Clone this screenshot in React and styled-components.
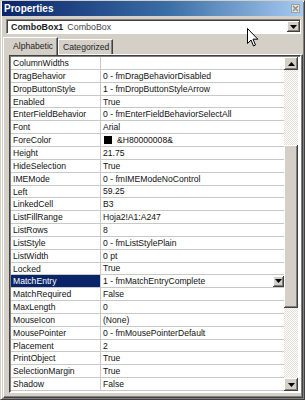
import React from 'react'
import styled, { createGlobalStyle } from 'styled-components'

const Global = createGlobalStyle`
  html, body { margin: 0; padding: 0; background: #d4d0c8; }
  * { box-sizing: border-box; }
`

const raised = `
  background: #d4d0c8;
  box-shadow: inset -1px -1px #404040, inset 1px 1px #ffffff, inset -2px -2px #808080, inset 2px 2px #d4d0c8;
`

const Window = styled.div`
  position: relative;
  width: 305px;
  height: 400px;
  display: flex;
  flex-direction: column;
  background: #d4d0c8;
  border: 1px solid;
  border-color: #d4d0c8 #404040 #404040 #d4d0c8;
  box-shadow: inset 1px 1px #ffffff, inset -1px -1px #808080;
  font-family: "Liberation Sans", Arial, sans-serif;
  overflow: hidden;
`

const TitleBar = styled.div`
  height: 16px;
  margin: 0 1px;
  display: flex;
  align-items: center;
  justify-content: space-between;
  padding: 0 3px 0 2px;
  background: linear-gradient(to right, #0a246a 0%, #3a6ea5 55%, #a6caf0 100%);
  color: #fff;
  font-weight: bold;
  font-size: 10px;
`

const CloseButton = styled.div`
  width: 9px;
  height: 9px;
  display: flex;
  align-items: center;
  justify-content: center;
  background: #e4e2dc;
  border: 1px solid #a0a0a0;
`

const Body = styled.div`
  flex: 1;
  display: flex;
  flex-direction: column;
  padding: 0 1px;
`

const Combo = styled.div`
  height: 15px;
  margin: 3px 2px 0 4px;
  display: flex;
  align-items: center;
  background: #fff;
  border: 1px solid;
  border-color: #808080 #ffffff #ffffff #808080;
  box-shadow: inset 1px 1px #404040;
  font-size: 8.9px;
  padding-left: 4px;
  color: #222;
`

const ComboName = styled.span`
  font-weight: bold;
  margin-right: 4px;
`

const ComboText = styled.span`
  flex: 1;
  color: #444;
`

const SmallButton = styled.div`
  ${raised}
  width: ${p => p.$w || 13}px;
  height: ${p => p.$h || 12}px;
  display: flex;
  align-items: center;
  justify-content: center;
  flex-shrink: 0;
`

const Tabs = styled.div`
  display: flex;
  align-items: flex-end;
  margin-top: 2px;
  height: 18px;
  padding-left: 1px;
`

const Tab = styled.div`
  height: ${p => (p.$active ? 18 : 15)}px;
  width: ${p => p.$w}px;
  padding: ${p => (p.$active ? '3px 0 0 9px' : '2px 0 0 4px')};
  font-size: 8.6px;
  color: #222;
  background: #d4d0c8;
  border-top: 1px solid #ffffff;
  border-left: 1px solid #ffffff;
  border-right: 1px solid #404040;
  box-shadow: inset -1px 0 #808080;
  position: relative;
  z-index: ${p => (p.$active ? 2 : 1)};
  margin-bottom: ${p => (p.$active ? -1 : 0)}px;
`

const Panel = styled.div`
  flex: 1;
  display: flex;
  margin: 0 0 1px 1px;
  padding: 0 1px 4px 5px;
  border-top: 1px solid #ffffff;
  border-left: 1px solid #ffffff;
  border-right: 1px solid #404040;
  border-bottom: 1px solid #404040;
  box-shadow: inset -1px -1px #808080;
`

const Grid = styled.div`
  flex: 1;
  display: flex;
  background: #fff;
  border: 1px solid;
  border-color: #404040 #ffffff #ffffff #404040;
  box-shadow: inset 1px 1px #808080;
  padding: 1px 2px 1px 1px;
`

const Rows = styled.div`
  flex: 1;
  display: flex;
  flex-direction: column;
  overflow: hidden;
`

const Row = styled.div`
  height: 12.85px;
  flex-shrink: 0;
  display: flex;
  font-size: 8.6px;
  line-height: 12px;
  color: #111;
`

const NameCell = styled.div`
  width: 90px;
  padding-left: 2px;
  white-space: nowrap;
  overflow: hidden;
  border-bottom: 1px solid #c8c8c8;
  border-right: 1px solid #c8c8c8;
  background: ${p => (p.$selected ? '#0a246a' : '#fff')};
  color: ${p => (p.$selected ? '#fff' : '#111')};
`

const ValueCell = styled.div`
  flex: 1;
  display: flex;
  align-items: center;
  padding-left: 2px;
  white-space: nowrap;
  overflow: hidden;
  border-bottom: 1px solid #c8c8c8;
`

const ValueText = styled.span`
  flex: 1;
`

const Swatch = styled.span`
  display: inline-block;
  width: 8px;
  height: 8px;
  background: #000;
  margin: 0 5px 0 1px;
`

const Scrollbar = styled.div`
  width: 14px;
  display: flex;
  flex-direction: column;
`

const Track = styled.div`
  flex: 1;
  display: flex;
  flex-direction: column;
  background: repeating-conic-gradient(#ffffff 0 25%, #e2dfd8 0 50%) 0 0 / 2px 2px;
`

const TrackSpace = styled.div`
  height: ${p => p.$h}px;
  flex-shrink: 0;
`

const Thumb = styled.div`
  ${raised}
  height: ${p => p.$h}px;
  flex-shrink: 0;
`

const Cursor = styled.svg`
  position: absolute;
  left: 246px;
  top: 27px;
`

const Arrow = ({ up }) => (
  <svg width="7" height="4" viewBox="0 0 7 4">
    <polygon points={up ? '3.5,0 7,4 0,4' : '0,0 7,0 3.5,4'} fill="#000" />
  </svg>
)

const rows = [
  ['ColumnWidths', ''],
  ['DragBehavior', '0 - fmDragBehaviorDisabled'],
  ['DropButtonStyle', '1 - fmDropButtonStyleArrow'],
  ['Enabled', 'True'],
  ['EnterFieldBehavior', '0 - fmEnterFieldBehaviorSelectAll'],
  ['Font', 'Arial'],
  ['ForeColor', '&H80000008&', 'swatch'],
  ['Height', '21.75'],
  ['HideSelection', 'True'],
  ['IMEMode', '0 - fmIMEModeNoControl'],
  ['Left', '59.25'],
  ['LinkedCell', 'B3'],
  ['ListFillRange', 'Hoja2!A1:A247'],
  ['ListRows', '8'],
  ['ListStyle', '0 - fmListStylePlain'],
  ['ListWidth', '0 pt'],
  ['Locked', 'True'],
  ['MatchEntry', '1 - fmMatchEntryComplete', 'selected'],
  ['MatchRequired', 'False'],
  ['MaxLength', '0'],
  ['MouseIcon', '(None)'],
  ['MousePointer', '0 - fmMousePointerDefault'],
  ['Placement', '2'],
  ['PrintObject', 'True'],
  ['SelectionMargin', 'True'],
  ['Shadow', 'False'],
]

export default function App() {
  return (
    <>
      <Global />
      <Window>
        <TitleBar>
          <span>Properties</span>
          <CloseButton>
            <svg width="7" height="7" viewBox="0 0 7 7">
              <path d="M1 1 L6 6 M6 1 L1 6" stroke="#8a8a8a" strokeWidth="1.3" />
            </svg>
          </CloseButton>
        </TitleBar>
        <Body>
          <Combo>
            <ComboName>ComboBox1</ComboName>
            <ComboText>ComboBox</ComboText>
            <SmallButton $w={13} $h={11}>
              <Arrow />
            </SmallButton>
          </Combo>
          <Tabs>
            <Tab $active $w={55}>Alphabetic</Tab>
            <Tab $w={55}>Categorized</Tab>
          </Tabs>
          <Panel>
            <Grid>
              <Rows>
                {rows.map(([name, value, kind]) => (
                  <Row key={name}>
                    <NameCell $selected={kind === 'selected'}>{name}</NameCell>
                    <ValueCell>
                      {kind === 'swatch' && <Swatch />}
                      <ValueText>{value}</ValueText>
                      {kind === 'selected' && (
                        <SmallButton $w={11} $h={11}>
                          <Arrow />
                        </SmallButton>
                      )}
                    </ValueCell>
                  </Row>
                ))}
              </Rows>
              <Scrollbar>
                <SmallButton $w={14} $h={13}>
                  <Arrow up />
                </SmallButton>
                <Track>
                  <TrackSpace $h={75} />
                  <Thumb $h={163} />
                </Track>
                <SmallButton $w={14} $h={13}>
                  <Arrow />
                </SmallButton>
              </Scrollbar>
            </Grid>
          </Panel>
        </Body>
        <Cursor width="12" height="19" viewBox="0 0 12 19">
          <path d="M0.5 0.5 L0.5 15.5 L4 12 L6.5 18 L8.5 17 L6 11.2 L10.8 11.2 Z" fill="#fff" stroke="#000" strokeWidth="1" />
        </Cursor>
      </Window>
    </>
  )
}
